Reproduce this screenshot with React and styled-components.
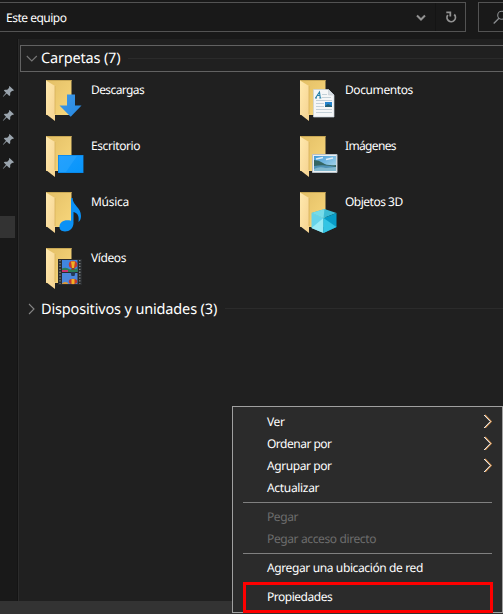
import React from "react";
import styled, { createGlobalStyle } from "styled-components";

const GlobalStyle = createGlobalStyle`
  * { box-sizing: border-box; }
  body { margin: 0; background: #191919; overflow: hidden; }
`;

const Window = styled.div`
  position: relative;
  width: 503px;
  height: 614px;
  overflow: hidden;
  display: flex;
  flex-direction: column;
  background: #191919;
  color: #fff;
  font-family: "Noto Sans", "Open Sans", sans-serif;
  font-size: 12px;
  text-rendering: geometricPrecision;
`;

const Toolbar = styled.header`
  height: 39px;
  padding-top: 2px;
  display: flex;
  gap: 12px;
  flex: none;
`;

const AddressBar = styled.div`
  width: 466px;
  flex: none;
  height: 30px;
  display: flex;
  align-items: center;
  border: 1px solid #535353;
  border-left: 0;
  padding-left: 6px;
`;

const Label = styled.span`
  white-space: nowrap;
  letter-spacing: ${(p) => p.$spacing ?? -0.42}px;
`;

const AddressActions = styled.div`
  display: flex;
  align-items: center;
  height: 28px;
  margin-left: auto;
`;

const AddressButton = styled.div`
  width: ${(p) => p.$width}px;
  height: 28px;
  display: flex;
  align-items: center;
  justify-content: center;
  border-right: ${(p) => (p.$divided ? "1px solid #141414" : "0")};
`;

const SearchBox = styled.div`
  width: 40px;
  height: 30px;
  flex: none;
  border: 1px solid #535353;
  padding: 7px 0 0 14px;
`;

const Body = styled.div`
  height: 562px;
  display: flex;
  flex: none;
`;

const Sidebar = styled.nav`
  width: 19px;
  flex: none;
  border-right: 1px solid #2b2b2b;
  box-shadow: inset -1px 0 #141414;
  padding-top: 40px;
  display: flex;
  flex-direction: column;
`;

const PinRow = styled.div`
  height: 24px;
  display: flex;
  align-items: center;
  padding-left: 2px;
`;

const SelectedItem = styled.div`
  width: 15px;
  height: 22px;
  margin-top: 41px;
  background: #333;
`;

const Content = styled.main`
  flex: 1;
  background: #202020;
  padding: 6px 0 0 1px;
`;

const GroupHeader = styled.div`
  height: 27px;
  display: flex;
  align-items: center;
  border: 1px solid ${(p) => (p.$focused ? "#626262" : "transparent")};
  border-right: 0;
  padding-left: 5px;
`;

const GroupTitle = styled(Label)`
  margin-left: 3px;
  padding-bottom: ${(p) => p.$lift || 0}px;
  font-size: 14.5px;
`;

const Rule = styled.div`
  flex: 1;
  height: 1px;
  margin-left: 8px;
  background: #2b2b2b;
`;

const FolderGrid = styled.div`
  display: grid;
  grid-template-columns: 254px 1fr;
  grid-template-rows: 56px 56px 56px 47px;
  padding: 8px 0 0 22px;
`;

const FolderItem = styled.div`
  display: flex;
`;

const FolderName = styled(Label)`
  margin-left: 4px;
  padding-top: 2px;
  line-height: 16px;
`;

const StatusBar = styled.footer`
  height: 13px;
  background: #333;
`;

const ContextMenu = styled.div`
  position: absolute;
  left: 232px;
  top: 406px;
  width: 271px;
  height: 207px;
  background: #2b2b2b;
  border: 1px solid #a0a0a0;
  padding: 3px 9px 0 10px;
`;

const MenuItem = styled.div`
  height: 22px;
  display: flex;
  align-items: center;
  justify-content: space-between;
  padding: 0 1px 0 24px;
  color: ${(p) => (p.$disabled ? "#6d6d6d" : "#fff")};
`;

const MenuSeparator = styled.div`
  height: 1px;
  margin: 4px 1px 2px 0;
  background: #808080;
`;

const Highlight = styled.div`
  height: 31px;
  margin-top: 4px;
  border: 3px solid #fe0000;
  display: flex;
  align-items: center;
  padding: 0 0 2px 21px;
`;

const Pin = () => (
  <svg width="13" height="13" viewBox="0 0 13 13">
    <path d="M7.5 1 12 5.3 10.8 6 10.2 5.8 8.2 7.8 8.2 10.2 7.3 11 4.7 8.4 1.2 11.8.8 11.5 4 7.7 1.8 5.5 2.8 4.7 5.2 4.8 7.2 2.8 6.9 2Z" fill="#9aa4ad" />
  </svg>
);

const Arrow = () => (
  <svg width="9" height="14" viewBox="0 0 9 14" fill="none">
    <path d="M2 1 8.200 7.500 2 14" stroke="#e09a55" strokeWidth="1.2" />
    <path d="M1 1 7.300 7.500 1 14" stroke="#e5edf3" />
  </svg>
);

const Overlays = {
  download: (
    <path d="M25 14.5h8v11h6.5L28.7 36.7 17.5 25.5H25Z" fill="url(#arrowBlue)" />
  ),
  desktop: (
    <>
      <path d="M16 19h25.500v18H16Z" fill="#087edb" />
      <path d="M16.5 19.5h24.500v17h-24.500Z" fill="url(#deskBlue)" />
      <path d="M17 20h18L24 36h-7Z" fill="#45b4ff" opacity=".3" />
    </>
  ),
  music: (
    <path d="M29 6h1.500c.5 8 8.500 9 8.500 18 0 3-1 5-2.500 6 .8-6-.7-9-5-10v11c0 5-4 8.500-8.500 8.500-4 0-5.500-2-5.500-4.700 0-5 5-7.500 11.500-6Z" fill="#0b91f5" />
  ),
  video: (
    <>
      <path d="M16 11h24v26H16Z" fill="#292b2d" />
      <path d="M20 12h15.500v12H20Z" fill="#4186df" />
      <path d="M20 25h15.500v11H20Z" fill="#4c88dc" />
      <path d="M20 20.500q4-2 8 1l7.500-1V24H20Z" fill="#2c7e57" />
      <path d="M20 22h6v2h-6Z" fill="#cb356e" />
      <ellipse cx="31" cy="16.500" rx="4.200" ry="3.800" fill="#c43a31" />
      <path d="M29 13.500h4l-1 6.500h-2Z" fill="#efb323" />
      <path d="M29.500 20h3v2h-3Z" fill="#7d4527" />
      <path d="M28.500 24h5l-1 4h-3Z" fill="#243957" />
      <ellipse cx="31" cy="33.500" rx="4.200" ry="2.800" fill="#c43a31" />
      <path d="M29.500 31h3v5h-3Z" fill="#efb323" />
      <path d="M20 35.500q3-2.500 6-.5v1h-6Z" fill="#d9993a" />
      <path d="M18 12v24M37.800 12v24" stroke="#8c9395" strokeWidth="1.3" strokeDasharray="1.300 1.600" />
    </>
  ),
  document: (
    <>
      <path d="M17.500 9.500h15L38 15v22H17.500Z" fill="#f5f6f7" stroke="#c7d3dc" strokeWidth=".7" />
      <path d="M32.500 9.500V15H38" fill="#d8dfe4" stroke="#c2cbd1" strokeWidth=".6" />
      <path d="m19.500 18 4-6 .8 6M20.800 15.500h3.500M19 18h2M23.300 18h2" stroke="#267fa9" strokeWidth="1.1" fill="none" />
      <path d="M26 14.500h5M26 17.500h9M20 20.500h16M20 23.500h8M20 26.500h8M20 29.500h16M20 32.500h16" stroke="#b6c6cf" strokeWidth=".8" />
      <path d="M29 22h7v5h-7Z" fill="#2483cd" />
      <path d="m29 26 3-2 4 2v1h-7Z" fill="#225e72" />
    </>
  ),
  picture: (
    <>
      <path d="M16.500 18.500h24.500v18H16.500Z" fill="#eceff1" stroke="#b7c1c8" />
      <path d="M18 20h22v15H18Z" fill="url(#sky)" />
      <path d="M18 24q5 0 9 3t13 2v3H18Z" fill="#356663" />
      <path d="M18 30q10-2 22 1v2H18Z" fill="#4e91b4" />
      <path d="M18 33q5-3 12-1l10-1v4H18Z" fill="#82b9cf" />
      <path d="m20 23 7-1.500m3 2 7-1.500" stroke="#dfedf4" strokeWidth="1.500" />
    </>
  ),
  cube: (
    <>
      <path d="m28.500 17 12 4-13 5-12-5Z" fill="#3bbbd5" />
      <path d="m28.500 17-1 9-12-5Z" fill="#77dce9" />
      <path d="m15.500 21 12 5v15l-12-5Z" fill="#66d3e9" />
      <path d="m15.500 36 12-10v15Z" fill="#9aeaf4" />
      <path d="m27.500 26 13-5v14l-13 6Z" fill="#079cc7" />
      <path d="m27.500 26 13 9-13 6Z" fill="#31c4e4" />
    </>
  ),
};

const FolderIcon = ({ kind }) => (
  <svg width="45" height="48" viewBox="0 0 45 48">
    <path d="M4 0h25.500v35H4Z" fill="url(#folderBack)" />
    <path d="M4.5.5h25" stroke="#c9a855" />
    <path d="m4 .5 9 5.500v35l-9-7Z" fill="url(#folderFront)" />
    <path d="M13 6v28" stroke="#d7b15b" strokeWidth=".8" />
    {Overlays[kind]}
  </svg>
);

const Gradient = ({ id, from, to }) => (
  <linearGradient id={id} x1="0" y1="0" x2="1" y2="1">
    <stop stopColor={from} /><stop offset="1" stopColor={to} />
  </linearGradient>
);

const DefsSvg = styled.svg`
  position: absolute;
  width: 0;
  height: 0;
`;

const folders = [
  ["Descargas", "download", -0.6], ["Documentos", "document", -0.4],
  ["Escritorio", "desktop", -0.4], ["Imágenes", "picture", -0.65],
  ["Música", "music", -0.3], ["Objetos 3D", "cube", -0.5],
  ["Vídeos", "video", -0.4],
];

export default function App() {
  return (
    <Window>
      <GlobalStyle />
      <DefsSvg>
        <defs>
          <Gradient id="folderBack" from="#e3bf66" to="#f8d77c" />
          <Gradient id="folderFront" from="#ffe9ae" to="#f5d391" />
          <Gradient id="arrowBlue" from="#4098e7" to="#2488e2" />
          <Gradient id="deskBlue" from="#189bff" to="#0795fa" />
          <Gradient id="sky" from="#3f99d7" to="#b9e0ed" />
        </defs>
      </DefsSvg>
      <Toolbar>
        <AddressBar>
          <Label $spacing={-0.5}>Este equipo</Label>
          <AddressActions>
            <AddressButton $width={30} $divided>
              <svg width="10" height="8" viewBox="0 0 10 8"><path d="m1 2.500 4 4 4-4" fill="none" stroke="#929292" strokeWidth="2" /></svg>
            </AddressButton>
            <AddressButton $width={29}>
              <svg width="12" height="12" viewBox="0 0 12 12" fill="none" stroke="#929292" strokeWidth="1.800"><path d="M9.200 3.500A4.200 4.200 0 1 1 2.800 4M1.300 1.400h4v4" /></svg>
            </AddressButton>
          </AddressActions>
        </AddressBar>
        <SearchBox>
          <svg width="14" height="14" viewBox="0 0 14 14" fill="none" stroke="#8a8d90"><circle cx="8.7" cy="5.200" r="4" strokeWidth="1.1" /><path d="M6 8.200.7 13.500" strokeWidth="1.3" /></svg>
        </SearchBox>
      </Toolbar>
      <Body>
        <Sidebar>
          <PinRow><Pin /></PinRow><PinRow><Pin /></PinRow>
          <PinRow><Pin /></PinRow><PinRow><Pin /></PinRow>
          <SelectedItem />
        </Sidebar>
        <Content>
          <GroupHeader $focused>
            <svg width="12" height="10" viewBox="0 0 12 10"><path d="m.8 2 5 5 5-5" fill="none" stroke="#777" strokeWidth="1.1" /></svg>
            <GroupTitle $spacing={-0.17} $lift={2}>Carpetas (7)</GroupTitle>
            <Rule />
          </GroupHeader>
          <FolderGrid>
            {folders.map(([name, kind, spacing]) => (
              <FolderItem key={name}>
                <FolderIcon kind={kind} />
                <FolderName $spacing={spacing}>{name}</FolderName>
              </FolderItem>
            ))}
          </FolderGrid>
          <GroupHeader>
            <svg width="12" height="12" viewBox="0 0 12 12"><path d="m3 1 5 5-5 5" fill="none" stroke="#858585" strokeWidth="1.1" /></svg>
            <GroupTitle $spacing={-0.15}>Dispositivos y unidades (3)</GroupTitle>
            <Rule />
          </GroupHeader>
        </Content>
      </Body>
      <StatusBar />
      <ContextMenu>
        <MenuItem><Label>Ver</Label><Arrow /></MenuItem>
        <MenuItem><Label $spacing={-0.5}>Ordenar por</Label><Arrow /></MenuItem>
        <MenuItem><Label>Agrupar por</Label><Arrow /></MenuItem>
        <MenuItem><Label $spacing={-0.32}>Actualizar</Label></MenuItem>
        <MenuSeparator />
        <MenuItem $disabled><Label>Pegar</Label></MenuItem>
        <MenuItem $disabled><Label $spacing={-0.38}>Pegar acceso directo</Label></MenuItem>
        <MenuSeparator />
        <MenuItem><Label $spacing={-0.38}>Agregar una ubicación de red</Label></MenuItem>
        <Highlight><Label $spacing={-0.48}>Propiedades</Label></Highlight>
      </ContextMenu>
    </Window>
  );
}
